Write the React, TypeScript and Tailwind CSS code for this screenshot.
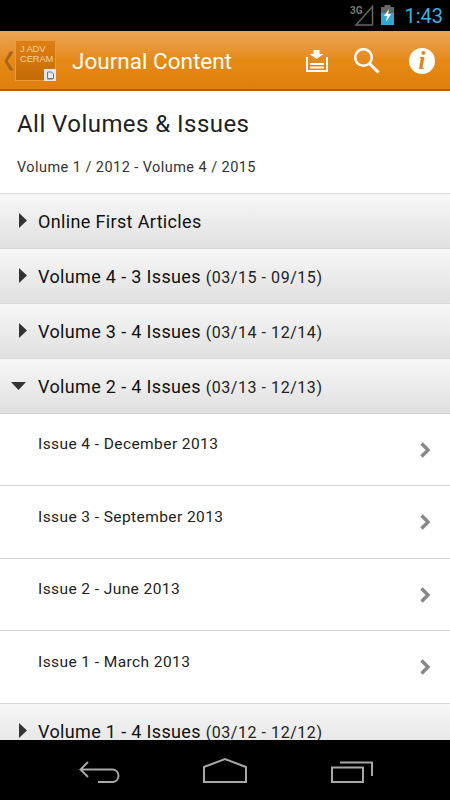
import React from 'react';

const volumes = [
  { title: 'Online First Articles', range: '' },
  { title: 'Volume 4 - 3 Issues', range: '(03/15 - 09/15)' },
  { title: 'Volume 3 - 4 Issues', range: '(03/14 - 12/14)' },
  { title: 'Volume 2 - 4 Issues', range: '(03/13 - 12/13)', open: true },
];
const issues = ['Issue 4 - December 2013', 'Issue 3 - September 2013', 'Issue 2 - June 2013', 'Issue 1 - March 2013'];

function VolumeRow({ title, range, open }: { title: string; range: string; open?: boolean }) {
  return (
    <div className={`${open ? 'h-[54.500px]' : 'h-[55px]'} shrink-0 flex border-t border-[#d9d9d9] bg-gradient-to-b from-[#f7f7f7] to-[#e0e0e0]`}>
      <div className="w-[38px] shrink-0 flex justify-center">
        {open ? (
          <svg width="38" height="54" viewBox="0 0 38 54"><path d="M11 23h15l-7.500 8z" fill="#333" /></svg>
        ) : (
          <svg width="38" height="54" viewBox="0 0 38 54"><path d="M19 19l8 7.500-8 7.500z" fill="#333" /></svg>
        )}
      </div>
      <p className="pt-[16px] text-[18px] leading-[24px] text-[#111] tracking-[0.35px] whitespace-nowrap">
        {title} {range && <span className="text-[16px] text-[#222] tracking-[0.55px]">{range}</span>}
      </p>
    </div>
  );
}

export default function App() {
  return (
    <div className="w-[450px] h-[800px] flex flex-col overflow-hidden bg-white font-['Roboto',sans-serif]">
      {/* status bar */}
      <div className="h-[31px] shrink-0 bg-black flex items-start justify-end">
        <svg width="24" height="22" viewBox="0 0 24 22" className="mt-[5px] mr-[7px]">
          <path d="M22.500 1.500V20H6z" fill="none" stroke="#666" strokeWidth="1.500" />
          <text x="0" y="9" fontSize="10" fontWeight="700" fill="#777" fontFamily="Roboto">3G</text>
        </svg>
        <svg width="13" height="20" viewBox="0 0 13 20" className="mt-[5px] mr-[10px]">
          <rect x="3.500" y="0" width="6" height="2" fill="#666" />
          <rect x="0" y="2" width="13" height="7" fill="#666" />
          <rect x="0" y="8" width="13" height="12" fill="#33a5d6" />
          <path d="M8 4L3 11h3l-1 6 5-8H7z" fill="#fff" />
        </svg>
        <span className="text-[#33b5e5] text-[20px] leading-[24px] mt-[4px] mr-[7px]">1:43</span>
      </div>

      {/* action bar */}
      <div className="h-[60px] shrink-0 flex items-center pt-[1px] bg-gradient-to-b from-[#eaa552] via-[#e68a15] to-[#e07f0b] border-b-2 border-[#b35f04]">
        <svg width="11" height="20" viewBox="0 0 11 20" className="ml-[4px]">
          <path d="M9 1L3 10l6 9H6L1 10l5-9z" fill="#a5661e" stroke="#a5661e" />
        </svg>
        <div className="relative w-[41px] h-[41px] bg-gradient-to-b from-[#e07f12] to-[#c46c08] border border-[#eb9a3e] pl-[4px] pt-[3px] text-[9.500px] leading-[10px] tracking-[-0.2px] text-[#f3cfa0] font-['Liberation_Sans',sans-serif]">
          <p>J ADV</p>
          <p>CERAM</p>
          <div className="absolute right-[-1px] bottom-[-1px] w-[12px] h-[12px] bg-[#e8e8e8] flex items-center justify-center">
            <svg width="8" height="9" viewBox="0 0 8 9">
              <path d="M1.500 1h4l2 2v4.500h-6z" fill="none" stroke="#678" />
              <path d="M1 8.500h6" stroke="#e9a060" />
            </svg>
          </div>
        </div>
        <h1 className="ml-[16px] text-[22.500px] text-white whitespace-nowrap pt-[2px]">Journal Content</h1>
        <svg width="22" height="22" viewBox="0 0 22 22" className="ml-[74px]">
          <path d="M7.500 0h6v4h4l-7 5-7-5h4z" fill="#fff" />
          <path d="M1 7v14h20V7" fill="none" stroke="#fff" strokeWidth="2" />
          <path d="M4 14h14M4 17.500h14" stroke="#fff" strokeWidth="2" />
        </svg>
        <svg width="26" height="26" viewBox="0 0 26 26" className="ml-[26px]">
          <circle cx="9.500" cy="9.500" r="8.300" fill="none" stroke="#fff" strokeWidth="2.500" />
          <path d="M15.500 15.500l9 9" stroke="#fff" strokeWidth="3" />
        </svg>
        <div className="ml-[29px] w-[26px] h-[26px] rounded-full bg-white flex items-center justify-center font-['Liberation_Serif',serif] italic font-bold text-[25px] leading-none text-[#e28412]">
          i
        </div>
      </div>

      {/* content */}
      <div className="flex-1 min-h-0 overflow-hidden flex flex-col">
        <div className="h-[102px] shrink-0 pl-[17px] pt-[18px]">
          <h2 className="text-[24px] leading-[30px] text-[#222] tracking-[0.45px]">All Volumes &amp; Issues</h2>
          <p className="mt-[19px] text-[14.500px] leading-[20px] text-[#333] tracking-[0.44px]">Volume 1 / 2012 - Volume 4 / 2015</p>
        </div>
        {volumes.map((v) => (
          <VolumeRow key={v.title} title={v.title} range={v.range} open={v.open} />
        ))}
        {issues.map((t) => (
          <div key={t} className="h-[72.500px] shrink-0 flex justify-between border-t border-[#d4d4d4] bg-white pl-[38px] pr-[19px]">
            <p className="pt-[20.500px] text-[15.500px] leading-[20px] text-[#222] tracking-[0.42px]">{t}</p>
            <svg width="12" height="18" viewBox="0 0 12 18" className="mt-[27px]">
              <path d="M2.500 2.500L9 9l-6.500 6.500" fill="none" stroke="#888" strokeWidth="3.500" />
            </svg>
          </div>
        ))}
        <VolumeRow title="Volume 1 - 4 Issues" range="(03/12 - 12/12)" />
      </div>

      {/* nav bar */}
      <div className="h-[60px] shrink-0 bg-black">
        <svg width="450" height="60" viewBox="0 0 450 60" fill="none" stroke="#a8a8a8" strokeWidth="2">
          <path d="M88 22l-7.500 7.500L88 37M81 29.500h32a6.300 6.300 0 0 1 0 12.500H98" />
          <path d="M204 42V27l21-8 21 8v15z" />
          <path d="M332 27.500h31V42h-31z" />
          <path d="M340 22.500h32V36" />
        </svg>
      </div>
    </div>
  );
}
